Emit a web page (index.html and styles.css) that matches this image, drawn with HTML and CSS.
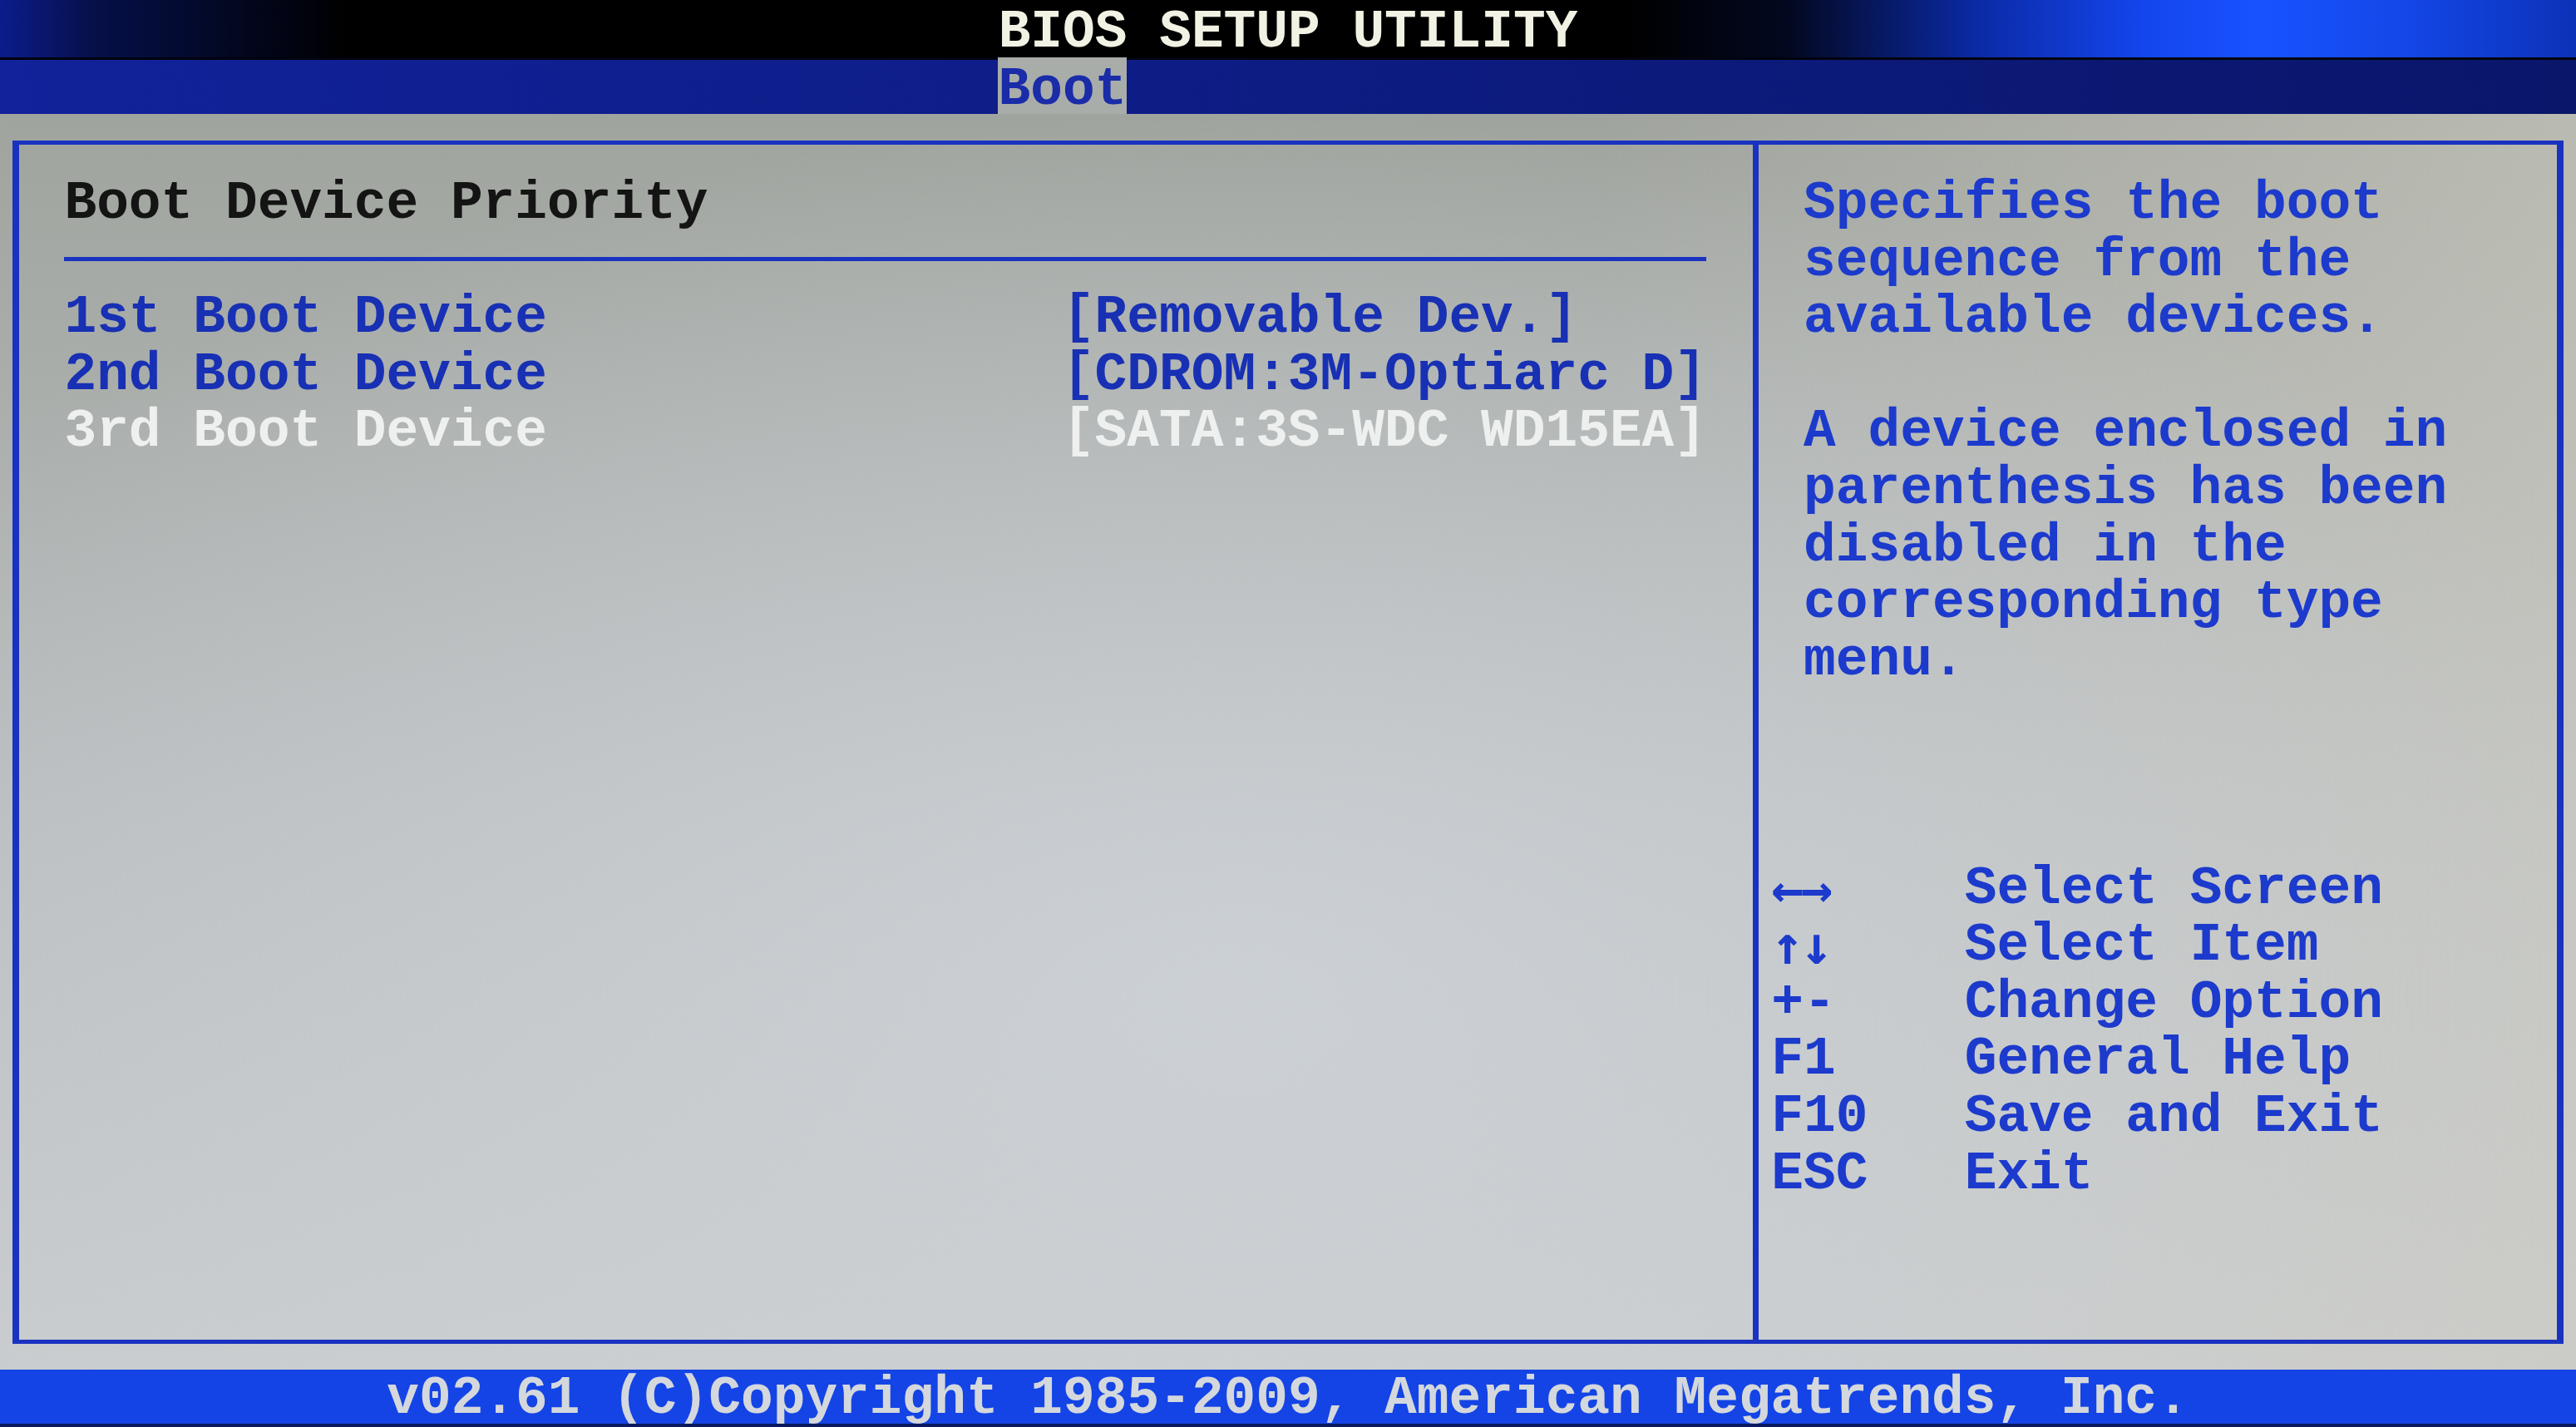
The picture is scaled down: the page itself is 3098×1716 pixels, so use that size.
FILE: index.html
```html
<!DOCTYPE html>
<html lang="en">
<head>
    <meta charset="UTF-8">
    <meta name="viewport" content="width=device-width, initial-scale=1.0">
    <title>BIOS Setup Utility</title>
    <link rel="stylesheet" href="styles.css">
</head>
<body>
    <div class="screen">
        <header class="title">BIOS SETUP UTILITY</header>

        <nav class="tabs">
            <span class="tab">Boot</span>
        </nav>

        <main class="body">
            <div class="frame">
                <section class="settings">
                    <h2>Boot Device Priority</h2>
                    <div class="rule"></div>
                    <ul class="items">
                        <li><span>1st Boot Device</span><span>[Removable Dev.]</span></li>
                        <li><span>2nd Boot Device</span><span>[CDROM:3M-Optiarc D]</span></li>
                        <li class="selected"><span>3rd Boot Device</span><span>[SATA:3S-WDC WD15EA]</span></li>
                    </ul>
                </section>

                <aside class="help">
                    <p>Specifies the boot sequence from the available devices.</p>
                    <p>A device enclosed in parenthesis has been disabled in the corresponding type menu.</p>
                    <ul class="keys">
                        <li><span class="key arrows">&larr;&rarr;</span>Select Screen</li>
                        <li><span class="key arrows">&uarr;&darr;</span>Select Item</li>
                        <li><span class="key">+-</span>Change Option</li>
                        <li><span class="key">F1</span>General Help</li>
                        <li><span class="key">F10</span>Save and Exit</li>
                        <li><span class="key">ESC</span>Exit</li>
                    </ul>
                </aside>
            </div>
        </main>

        <footer class="footer">v02.61 (C)Copyright 1985-2009, American Megatrends, Inc.</footer>
    </div>
</body>
</html>
```

FILE: styles.css
```css
/* 80x25 text mode: one column = --cw, one row = --rh */
:root {
    --cw: 38.725px;
    --rh: 68.64px;
    --shift: 5px;
    --line: #1a32c0;
}
* {
    box-sizing: border-box;
}
html, body {
    margin: 0;
    padding: 0;
}
body {
    background: #000;
    font-family: "Liberation Mono", "DejaVu Sans Mono", monospace;
    font-size: 64.5px;
    font-weight: bold;
    line-height: var(--rh);
    overflow: hidden;
}
.screen {
    display: grid;
    grid-template-rows: var(--rh) var(--rh) 1fr var(--rh);
    width: 3098px;
    height: 1716px;
}
.title {
    padding-top: var(--shift);
    text-align: center;
    color: #f2f2e4;
    background: linear-gradient(90deg, #0c1c8c 0, #06104a 110px, #000 420px, #000 1950px, #030820 2150px, #0b2aa6 2380px, #1446ee 2580px, #1852ff 2720px, #1448ea 2880px, #0c32b8 3098px);
}
.tabs {
    display: flex;
    padding-left: calc(31 * var(--cw));
    background: linear-gradient(90deg, #11229a 0, #0e1d88 40%, #0a166a 100%);
    border-top: 3px solid #02030e;
}
.tab {
    width: calc(4 * var(--cw));
    margin-top: -3px;
    padding-top: var(--shift);
    background: #a9adaa;
    color: #1a2ca8;
}
.body {
    padding: calc(var(--rh) / 2 - 2.5px) calc(var(--cw) / 2 - 4px);
    background:
        radial-gradient(ellipse 60% 70% at 48% 70%, rgba(206, 211, 216, 0.85), rgba(206, 211, 216, 0) 100%),
        linear-gradient(90deg, rgba(0, 0, 0, 0) 62%, rgba(206, 204, 192, 0.55) 100%),
        linear-gradient(to bottom, #a0a49e, #b9bdbf 55%, #c9ccce);
}
.frame {
    height: 100%;
    display: grid;
    grid-template-columns: calc(54 * var(--cw) - 7px) 1fr;
    border: solid var(--line);
    border-width: 5px 8px;
}

/* left panel */
.settings {
    padding: calc(var(--rh) / 2 - 2.5px + var(--shift)) 0 0 calc(1.5 * var(--cw) - 4px);
}
.settings h2 {
    margin: 0;
    font: inherit;
    color: #141414;
}
.rule {
    display: flex;
    align-items: center;
    width: calc(51 * var(--cw));
    height: var(--rh);
}
.rule::after {
    content: '';
    flex: 1;
    margin-top: -4px;
    border-top: 5px solid var(--line);
}
.items {
    list-style: none;
    margin: 0;
    padding: 0;
    color: #1830b4;
}
.items li {
    display: grid;
    grid-template-columns: calc(31 * var(--cw)) auto;
    white-space: pre;
}
.items li.selected {
    color: #eef0f0;
}

/* right panel */
.help {
    border-left: 7px solid var(--line);
    padding: calc(var(--rh) / 2 - 2.5px + var(--shift)) 0 0 calc(1.5 * var(--cw) - 3.5px);
    color: #1c3acc;
}
.help p {
    width: calc(21 * var(--cw));
    margin: 0 0 var(--rh);
}
.keys {
    list-style: none;
    padding: 0;
    margin: calc(3 * var(--rh)) 0 0 calc(-1 * var(--cw));
}
.keys li {
    display: flex;
    white-space: pre;
}
.key {
    width: calc(6 * var(--cw));
}
.arrows {
    font-family: "DejaVu Sans Mono", monospace;
    letter-spacing: -4px;
}

/* last row: line box kept inside the row so nothing hangs off the screen */
.footer {
    padding-top: 8px;
    line-height: calc(var(--rh) - 14px);
    text-align: center;
    white-space: pre;
    color: #d4d8dc;
    background: #1444e6;
    border-bottom: 4px solid #0a1a60;
}
```
